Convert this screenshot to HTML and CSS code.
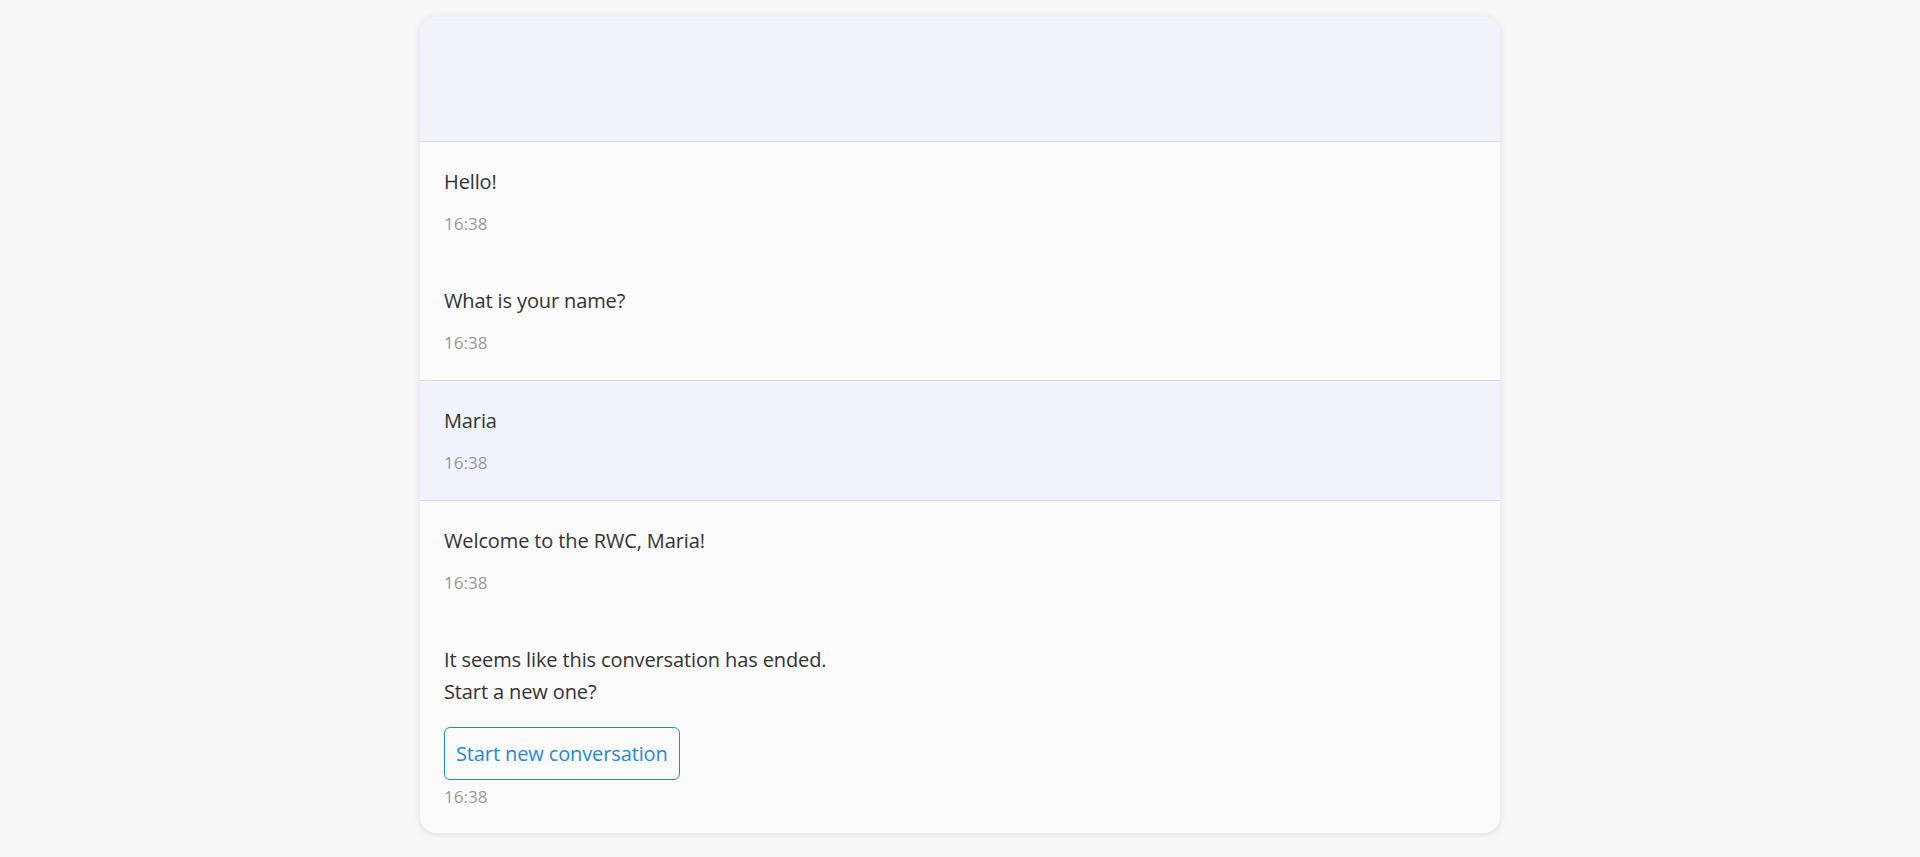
FILE: index.html
```html
<!DOCTYPE html>
<html lang="en">
<head>
    <meta charset="UTF-8">
    <title>RWC Chat</title>
    <link rel="stylesheet" href="styles.css">
</head>
<body>

    <div class="chat">
        <div class="chat-header"></div>

        <div class="chat-messages">
            <div class="message bot">
                <div class="message-text">Hello!</div>
                <div class="message-time">16:38</div>
            </div>
            <div class="message bot">
                <div class="message-text">What is your name?</div>
                <div class="message-time">16:38</div>
            </div>
            <div class="message user">
                <div class="message-text">Maria</div>
                <div class="message-time">16:38</div>
            </div>
            <div class="message bot">
                <div class="message-text">Welcome to the RWC, Maria!</div>
                <div class="message-time">16:38</div>
            </div>
            <div class="message bot last">
                <div class="message-text">It seems like this conversation has ended.<br>Start a new one?</div>
                <button class="btn-restart">Start new conversation</button>
                <div class="message-time">16:38</div>
            </div>
        </div>
    </div>

</body>
</html>
```

FILE: styles.css
```css
body {
    margin: 0;
    padding: 17px 0 22px;
    background-color: #f8f8f8;
    font-family: "Open Sans", "Noto Sans", Arial, sans-serif;
    color: #333;
}
.chat {
    width: 1080px;
    margin: 0 auto;
    background-color: #fafafa;
    border-radius: 16px;
    box-shadow: 0 1px 8px rgba(0,0,0,0.12);
    overflow: hidden;
}
.chat-header {
    height: 124px;
    background-color: #f0f3fc;
    border-bottom: 1px solid #dcdce2;
}
.message {
    padding: 24px 24px;
}
.message.user {
    background-color: #f0f3fc;
    border-top: 1px solid #dcdcdc;
    border-bottom: 1px solid #dcdcdc;
}
.message-text {
    font-size: 20px;
    line-height: 32px;
    letter-spacing: -0.12px;
    color: #333;
}
.message-time {
    margin-top: 12px;
    font-size: 17px;
    line-height: 27px;
    color: #999;
}
.btn-restart {
    display: block;
    margin-top: 19px;
    padding: 10px 11px;
    font-family: inherit;
    font-size: 20px;
    line-height: 31px;
    letter-spacing: -0.12px;
    color: #1e88e5;
    background-color: transparent;
    border: 1px solid #1e88e5;
    border-radius: 6px;
    cursor: pointer;
}
.last {
    padding-bottom: 23px;
}
.last .message-time {
    margin-top: 3px;
}
```
